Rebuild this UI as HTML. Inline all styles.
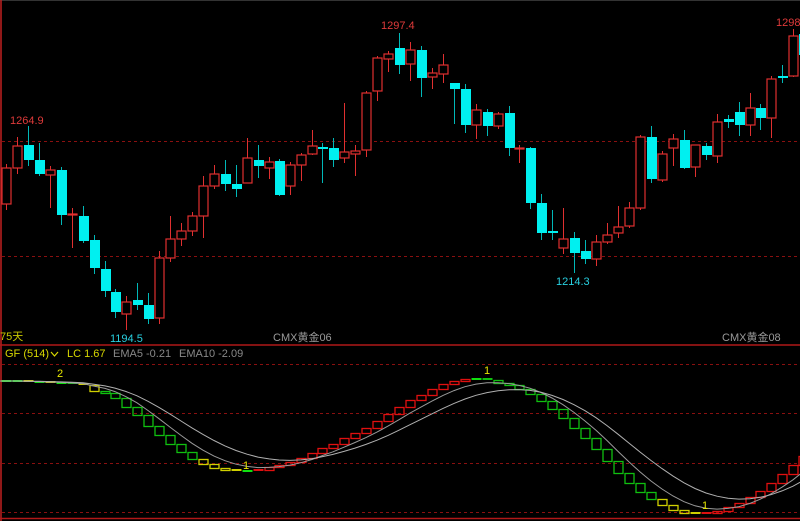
<!DOCTYPE html>
<html><head><meta charset="utf-8"><style>
html,body{margin:0;padding:0;background:#000;overflow:hidden}
svg{display:block}
text{font-family:"Liberation Sans","Noto Sans CJK SC",sans-serif;font-size:11px}
</style></head><body>
<svg id="s" width="800" height="521" viewBox="0 0 800 521" xmlns="http://www.w3.org/2000/svg">
<rect width="800" height="521" fill="#000"/>
<line x1="0" y1="0.5" x2="800" y2="0.5" stroke="#333"/>
<line x1="1" y1="0" x2="1" y2="521" stroke="#c02020" stroke-width="1.5"/>
<g stroke="#8a1010" stroke-dasharray="3,3" stroke-width="1">
<line x1="2" y1="141.5" x2="800" y2="141.5"/><line x1="2" y1="256.5" x2="800" y2="256.5"/>
<line x1="2" y1="364.5" x2="800" y2="364.5"/><line x1="2" y1="413.5" x2="800" y2="413.5"/>
<line x1="2" y1="463.5" x2="800" y2="463.5"/><line x1="2" y1="512.5" x2="800" y2="512.5"/>
</g>
<line x1="0" y1="345" x2="800" y2="345" stroke="#b01818" stroke-width="1.5"/>
<line x1="0" y1="518.5" x2="800" y2="518.5" stroke="#b01818" stroke-width="1.5"/>
<g id="c"></g>
<g id="ind"></g>
<text x="10" y="124" fill="#e03a3a">1264.9</text>
<text x="381" y="29" fill="#e03a3a">1297.4</text>
<text x="776" y="26" fill="#e03a3a">1298</text>
<text x="110" y="342" fill="#28d0e0">1194.5</text>
<text x="556" y="285" fill="#28d0e0">1214.3</text>
<text x="0" y="340" fill="#c8c800">75天</text>
<text x="273" y="341" fill="#999" font-size="10">CMX黄金06</text>
<text x="722" y="341" fill="#999" font-size="10">CMX黄金08</text>
<text x="5" y="357" fill="#d8d800">GF (514)</text>
<path d="M51 352 l3.5 4 l3.5 -4" stroke="#d8d800" fill="none" stroke-width="1.2"/>
<text x="67" y="357" fill="#d8d800">LC 1.67</text>
<text x="113" y="357" fill="#888">EMA5 -0.21</text>
<text x="179" y="357" fill="#888">EMA10 -2.09</text>
<text x="57" y="377" fill="#e8e800">2</text>
<text x="243" y="469" fill="#e8e800">1</text>
<text x="484" y="374" fill="#e8e800">1</text>
<text x="702" y="509" fill="#e8e800">1</text>
</svg>
<script>
var C=[[6,'r',168,204,164,210],[17,'r',146,168,137,174],[28,'c',145,160,126,166],[39,'c',160,174,143,176],[50,'r',170,175,166,208],[61,'c',170,215,167,225],[72,'r',214,214,208,248],[83,'c',216,241,206,243],[94,'c',240,268,235,274],[105,'c',269,291,261,297],[115,'c',292,312,289,318],[126,'r',302,314,296,330],[137,'c',300,305,283,310],[148,'c',305,319,293,324],[159,'r',258,318,251,324],[170,'r',239,258,216,262],[181,'r',231,239,223,246],[192,'r',216,231,212,236],[203,'r',186,216,176,238],[214,'r',174,186,165,189],[225,'c',174,184,160,191],[236,'c',184,189,165,197],[247,'r',158,183,138,183],[258,'c',160,166,145,178],[269,'r',162,168,157,179],[279,'c',161,195,159,196],[290,'r',165,186,162,195],[301,'r',155,165,153,181],[312,'r',146,154,130,155],[322,'c',147,149,143,183],[333,'c',148,160,138,167],[344,'r',152,158,103,163],[355,'r',151,154,145,176],[366,'r',93,150,91,157],[377,'r',58,91,56,101],[388,'r',54,59,51,72],[399,'c',48,65,33,74],[410,'r',50,64,42,81],[421,'c',50,78,46,97],[432,'r',73,77,68,89],[443,'r',65,74,54,83],[454,'c',83,89,83,124],[465,'c',89,125,84,133],[476,'r',110,125,104,139],[487,'c',112,126,109,136],[498,'r',114,126,112,129],[509,'c',113,148,106,156],[519,'r',148,148,145,163],[530,'c',148,203,147,209],[541,'c',203,233,194,240],[552,'c',231,233,210,240],[563,'r',239,248,208,254],[574,'c',238,253,232,273],[585,'c',251,259,240,264],[596,'r',242,259,235,266],[607,'r',235,242,223,244],[618,'r',227,233,206,238],[629,'r',208,226,202,228],[640,'r',137,208,135,210],[651,'c',137,179,126,183],[662,'r',154,180,151,182],[673,'r',139,148,134,166],[684,'c',140,168,130,169],[695,'r',145,167,145,177],[706,'c',146,155,143,160],[717,'r',122,156,114,163],[728,'c',119,122,115,128],[739,'c',112,125,102,136],[750,'r',108,125,93,136],[760,'c',108,118,104,130],[771,'r',79,118,76,138],[782,'c',76,77,65,83],[793,'r',36,76,29,77],[803,'c',34,55,30,60]];
var h='';
C.forEach(function(d){var x=d[0];
if(d[1]=='r'){h+='<line x1="'+(x+.5)+'" y1="'+d[4]+'" x2="'+(x+.5)+'" y2="'+d[5]+'" stroke="#e03030"/>';
var hh=Math.max(d[3]-d[2],1);h+='<rect x="'+(x-4)+'" y="'+d[2]+'" width="9" height="'+hh+'" fill="#000" stroke="#e03030" stroke-width="1.2"/>';}
else{h+='<line x1="'+(x+.5)+'" y1="'+d[4]+'" x2="'+(x+.5)+'" y2="'+d[5]+'" stroke="#00b8b8"/>';
h+='<rect x="'+(x-4)+'" y="'+d[2]+'" width="10" height="'+Math.max(d[3]-d[2],2)+'" fill="#00f0f0"/>';}
});
document.getElementById('c').innerHTML=h;
var Y=[381,381,382,382,383,383,384,385,391,393,398,407,415,426,435,444,452,459,464,468,470,471,471,470,467,465,462,458,453,448,444,438,433,428,421,414,407,400,395,389,384,381,379,379,380,383,385,389,394,401,409,418,428,438,449,461,473,483,492,499,505,510,513,514,513,511,507,503,497,491,483,474,465,456];
var col={};[2,4,7,8,18,19,20,21,60,61,62,63].forEach(function(i){col[i]='#d0d000'});
var g='';var prev=381;
for(var i=0;i<Y.length;i++){var x=C[i][0],y=Y[i];var t=Math.min(prev,y),b=Math.max(prev,y);
var c=col[i]||(y<prev?'#e01010':(y>prev?'#10c010':'#10e010'));
if(i==0)c='#10e010';
if(b-t<2){g+='<rect x="'+(x-4.5)+'" y="'+(t-1)+'" width="10" height="2" fill="'+c+'"/>';}
else g+='<rect x="'+(x-4)+'" y="'+(t+.5)+'" width="9" height="'+(b-t)+'" fill="none" stroke="'+c+'" stroke-width="1.3"/>';
prev=y;}
function ema(n){var a=2/(n+1),e=381,p='M0 381';for(var i=0;i<Y.length;i++){e=e+a*(Y[i]-e);p+=' L'+C[i][0]+' '+e.toFixed(1);}return p;}
g+='<path d="'+ema(5)+'" stroke="#9a9a9a" fill="none" stroke-width="1"/>';
g+='<path d="'+ema(10)+'" stroke="#b0b0b0" fill="none" stroke-width="1"/>';
document.getElementById('ind').innerHTML=g;
</script>
</body></html>
